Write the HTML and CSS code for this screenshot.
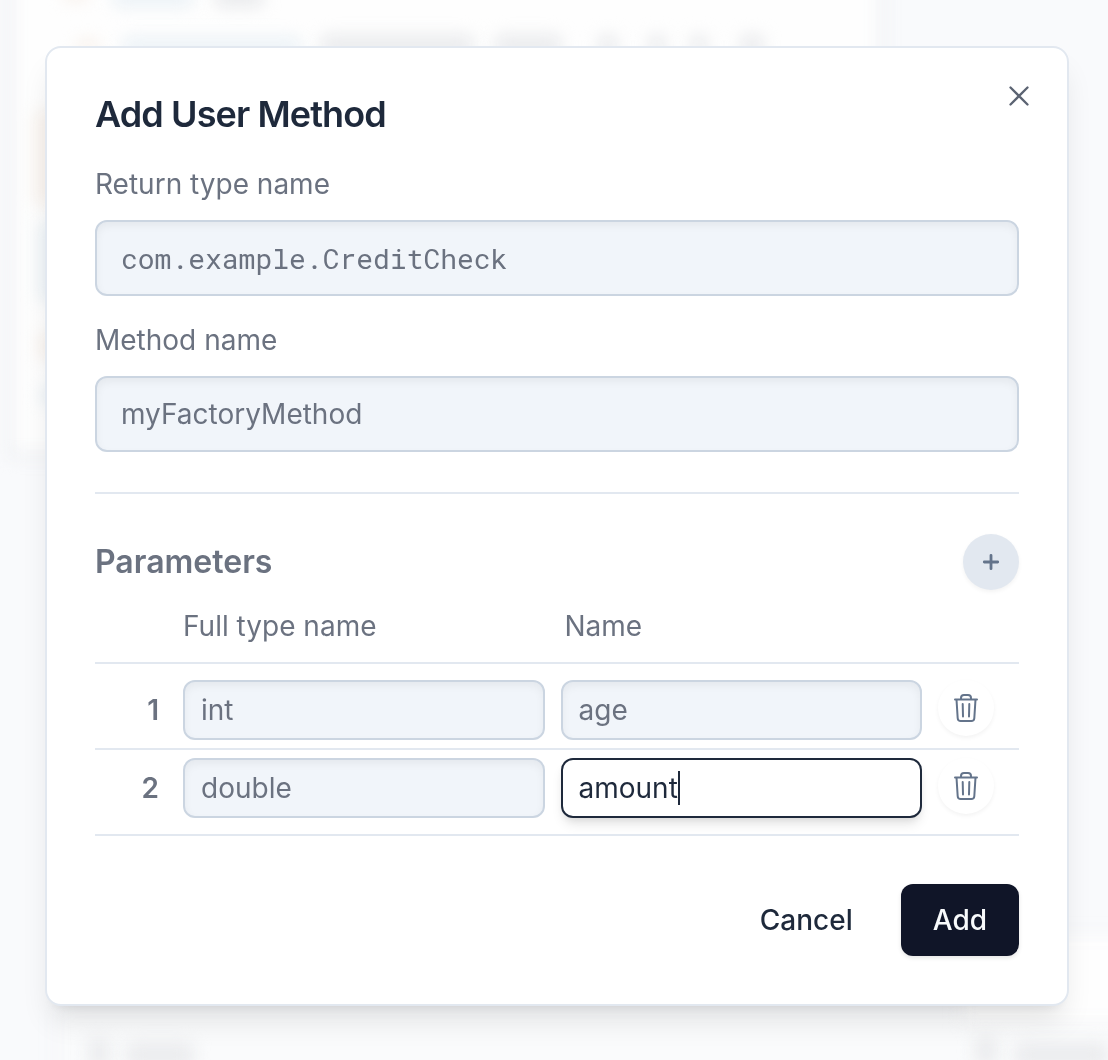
FILE: index.html
```html
<!DOCTYPE html>
<html lang="en">
<head>
<meta charset="utf-8">
<title>Add User Method</title>
<link rel="stylesheet" href="styles.css">
</head>
<body>
<div class="backdrop" aria-hidden="true">
  <div class="panel panel-code"></div>
  <div class="panel panel-input"></div>
  <div class="panel panel-output"></div>
  <i class="smudge warm s1"></i>
  <i class="smudge blue s2"></i>
  <i class="smudge grey s3"></i>
  <i class="smudge warm s4"></i>
  <i class="smudge blue s5"></i>
  <i class="smudge grey s6"></i>
  <i class="smudge grey s15"></i>
  <i class="smudge grey s16"></i>
  <i class="smudge grey s17"></i>
  <i class="smudge grey s18"></i>
  <i class="smudge grey s19"></i>
  <i class="smudge warm s7"></i>
  <i class="smudge blue s8"></i>
  <i class="smudge warm s9"></i>
  <i class="smudge blue s10"></i>
  <i class="smudge grey s11"></i>
  <i class="smudge grey s12"></i>
  <i class="smudge grey s13"></i>
  <i class="smudge grey s14"></i>
</div>
<main class="overlay">
  <form class="dialog" role="dialog" aria-labelledby="dialog-title">
    <button class="close" type="button" aria-label="Close">
      <svg width="32" height="32" viewBox="0 0 32 32" fill="none" stroke="currentColor" stroke-width="2.3" stroke-linecap="round"><path d="M7.500 7.500l17 17M24.500 7.500l-17 17"/></svg>
    </button>
    <h1 class="title" id="dialog-title">Add User Method</h1>
    <div class="field">
      <label class="label" for="return-type">Return type name</label>
      <input class="input input-lg mono" id="return-type" type="text" value="com.example.CreditCheck">
    </div>
    <div class="field">
      <label class="label" for="method-name">Method name</label>
      <input class="input input-lg" id="method-name" type="text" value="myFactoryMethod">
    </div>
    <section class="params">
      <header class="params-head">
        <h2 class="subtitle">Parameters</h2>
        <button class="round round-add" type="button" aria-label="Add parameter">
          <svg width="32" height="32" viewBox="0 0 32 32" fill="none" stroke="currentColor" stroke-width="2.8" stroke-linecap="round"><path d="M16 9.300v13.400M9.300 16h13.400"/></svg>
        </button>
      </header>
      <table class="table">
        <colgroup><col class="col-index"><col><col><col class="col-action"></colgroup>
        <thead>
          <tr><td></td><th scope="col" id="h-type">Full type name</th><th scope="col" id="h-name"><span class="head-name">Name</span></th><td></td></tr>
        </thead>
        <tbody>
          <tr>
            <th class="index" scope="row">1</th>
            <td><input class="input" type="text" aria-labelledby="h-type" value="int"></td>
            <td><input class="input" type="text" aria-labelledby="h-name" value="age"></td>
            <td>
              <button class="round" type="button" aria-label="Delete parameter 1">
                <svg width="32" height="32" viewBox="0 0 32 32" fill="none" stroke="currentColor" stroke-width="2" stroke-linecap="round" stroke-linejoin="round"><path d="M5 7.500h22M6.500 7.500l1.200 18.700q.2 2.800 3 2.800h10.600q2.800 0 3-2.800l1.200-18.700M11 7.500V6q0-3 3-3h4q3 0 3 3v1.500M12.700 12l.3 12.500M19.300 12l-.3 12.500"/></svg>
              </button>
            </td>
          </tr>
          <tr>
            <th class="index" scope="row">2</th>
            <td><input class="input" type="text" aria-labelledby="h-type" value="double"></td>
            <td>
              <div class="active-cell">
                <input class="input input-active" type="text" aria-labelledby="h-name" value="amount" autofocus>
                <span class="caret"></span>
              </div>
            </td>
            <td>
              <button class="round" type="button" aria-label="Delete parameter 2">
                <svg width="32" height="32" viewBox="0 0 32 32" fill="none" stroke="currentColor" stroke-width="2" stroke-linecap="round" stroke-linejoin="round"><path d="M5 7.500h22M6.500 7.500l1.200 18.700q.2 2.800 3 2.800h10.600q2.800 0 3-2.800l1.200-18.700M11 7.500V6q0-3 3-3h4q3 0 3 3v1.500M12.700 12l.3 12.500M19.300 12l-.3 12.500"/></svg>
              </button>
            </td>
          </tr>
        </tbody>
      </table>
    </section>
    <footer class="actions">
      <button class="btn" type="button">Cancel</button>
      <button class="btn btn-primary" type="submit">Add</button>
    </footer>
  </form>
</main>
</body>
</html>
```

FILE: styles.css
```css
*, *::before, *::after { box-sizing: border-box; }

body {
  margin: 0;
  background: #f9fafc;
  color: #6b7280;
  font: 400 28px/40px Inter, sans-serif;
}

button, input { font: inherit; color: inherit; }
button { border: 0; background: none; cursor: pointer; }
svg { display: block; }

/* Blurred workspace behind the dialog */
.backdrop { position: fixed; inset: 0; overflow: hidden; z-index: -1; }
.panel { position: absolute; background: #fefefe; border: 2px solid #eceef1; filter: blur(8px); }
.panel-code { left: 8px; top: -40px; width: 876px; height: 498px; border-width: 6px; }
.panel-input { left: 56px; top: 1010px; width: 1080px; height: 100px; background: #fafbfc; }
.panel-output { left: 960px; top: 934px; width: 240px; height: 90px; }
.smudge { position: absolute; filter: blur(8px); border-radius: 8px; }
.warm { background: #f9f3ee; }
.blue { background: #edf3f7; }
.grey { background: #ebecee; }
.s1 { left: 62px; top: -16px; width: 28px; height: 18px; }
.s2 { left: 112px; top: -16px; width: 82px; height: 24px; }
.s3 { left: 214px; top: -16px; width: 50px; height: 24px; }
.s4 { left: 76px; top: 38px; width: 24px; height: 18px; }
.s5 { left: 122px; top: 36px; width: 180px; height: 20px; }
.s6 { left: 320px; top: 34px; width: 154px; height: 22px; }
.s7 { left: 34px; top: 110px; width: 40px; height: 96px; }
.s8 { left: 38px; top: 222px; width: 40px; height: 80px; }
.s9 { left: 38px; top: 332px; width: 40px; height: 28px; }
.s10 { left: 40px; top: 386px; width: 40px; height: 20px; }
.s11 { left: 88px; top: 1038px; width: 22px; height: 30px; }
.s12 { left: 126px; top: 1042px; width: 68px; height: 26px; }
.s13 { left: 974px; top: 1036px; width: 24px; height: 30px; }
.s14 { left: 1014px; top: 1042px; width: 94px; height: 26px; }
.s15 { left: 494px; top: 34px; width: 68px; height: 22px; }
.s16 { left: 598px; top: 34px; width: 20px; height: 22px; }
.s17 { left: 648px; top: 34px; width: 18px; height: 22px; }
.s18 { left: 690px; top: 34px; width: 18px; height: 22px; }
.s19 { left: 740px; top: 34px; width: 24px; height: 22px; }

.overlay { padding: 46px 39px 54px 45px; }

.dialog {
  position: relative;
  max-width: 1024px;
  margin: 0 auto;
  padding: 48px;
  background: #fff;
  border: 2px solid #e2e8f0;
  border-radius: 16px;
  box-shadow: 0 20px 30px -6px rgb(0 0 0 / 10%), 0 8px 12px -8px rgb(0 0 0 / 10%);
}

.close {
  position: absolute;
  top: 32px;
  right: 32px;
  padding: 0;
  color: #5b6372;
}

.title {
  margin: 0 0 32px;
  color: #1e293b;
  font-size: 36px;
  font-weight: 600;
  line-height: 36px;
  letter-spacing: -0.025em;
}

.field { display: flex; flex-direction: column; gap: 16px; margin-bottom: 24px; }

.input {
  display: block;
  width: 100%;
  height: 60px;
  padding: 0 16px;
  background: #f1f5fa;
  border: 2px solid #cbd5e1;
  border-radius: 12px;
  box-shadow: inset 0 4px 8px rgb(0 0 0 / 5%);
  outline: none;
}
.input-lg { height: 76px; padding: 0 24px; }
.mono { font-family: "Roboto Mono", "Liberation Mono", monospace; }
.input-active, .input:focus {
  background: #fff;
  border-color: #1e293b;
  color: #1e293b;
  box-shadow: 0 8px 12px -2px rgb(0 0 0 / 10%), 0 4px 8px -4px rgb(0 0 0 / 10%);
}

/* Text cursor shown steady after the typed value */
.active-cell { position: relative; }
.active-cell .input { caret-color: transparent; }
.caret { position: absolute; left: 117px; top: 13px; width: 2px; height: 34px; background: #1e293b; }

.params { margin-top: 40px; padding-top: 40px; border-top: 2px solid #e2e8f0; }
.params-head { display: flex; align-items: center; justify-content: space-between; }
.subtitle { margin: 0; font-size: 32px; font-weight: 600; }

.round {
  display: grid;
  place-items: center;
  width: 56px;
  height: 56px;
  padding: 0;
  border-radius: 50%;
  color: #64748b;
  box-shadow: 0 2px 4px rgb(0 0 0 / 5%);
}
.round-add { background: #e2e8f0; }

.table { width: 100%; table-layout: fixed; border-collapse: separate; border-spacing: 0; }
.col-index { width: 80px; }
.col-action { width: 89px; }
.table td, .table th { padding: 8px; text-align: left; vertical-align: top; border-bottom: 2px solid #e2e8f0; }
.table thead th { padding: 16px 8px; font-weight: 400; }
.head-name { padding-left: 4px; }
.table .index { padding-right: 16px; text-align: right; font-weight: 600; line-height: 60px; }
.table tbody tr:first-child > * { padding-top: 16px; }
.table tbody tr:last-child > * { padding-bottom: 16px; }

.actions { display: flex; justify-content: flex-end; gap: 16px; margin-top: 48px; }
.btn {
  height: 72px;
  padding: 0 32px;
  border-radius: 12px;
  color: #1e293b;
  font-weight: 500;
}
.btn-primary { background: #101528; color: #f8fafc; box-shadow: 0 2px 4px rgb(0 0 0 / 10%); }
```
